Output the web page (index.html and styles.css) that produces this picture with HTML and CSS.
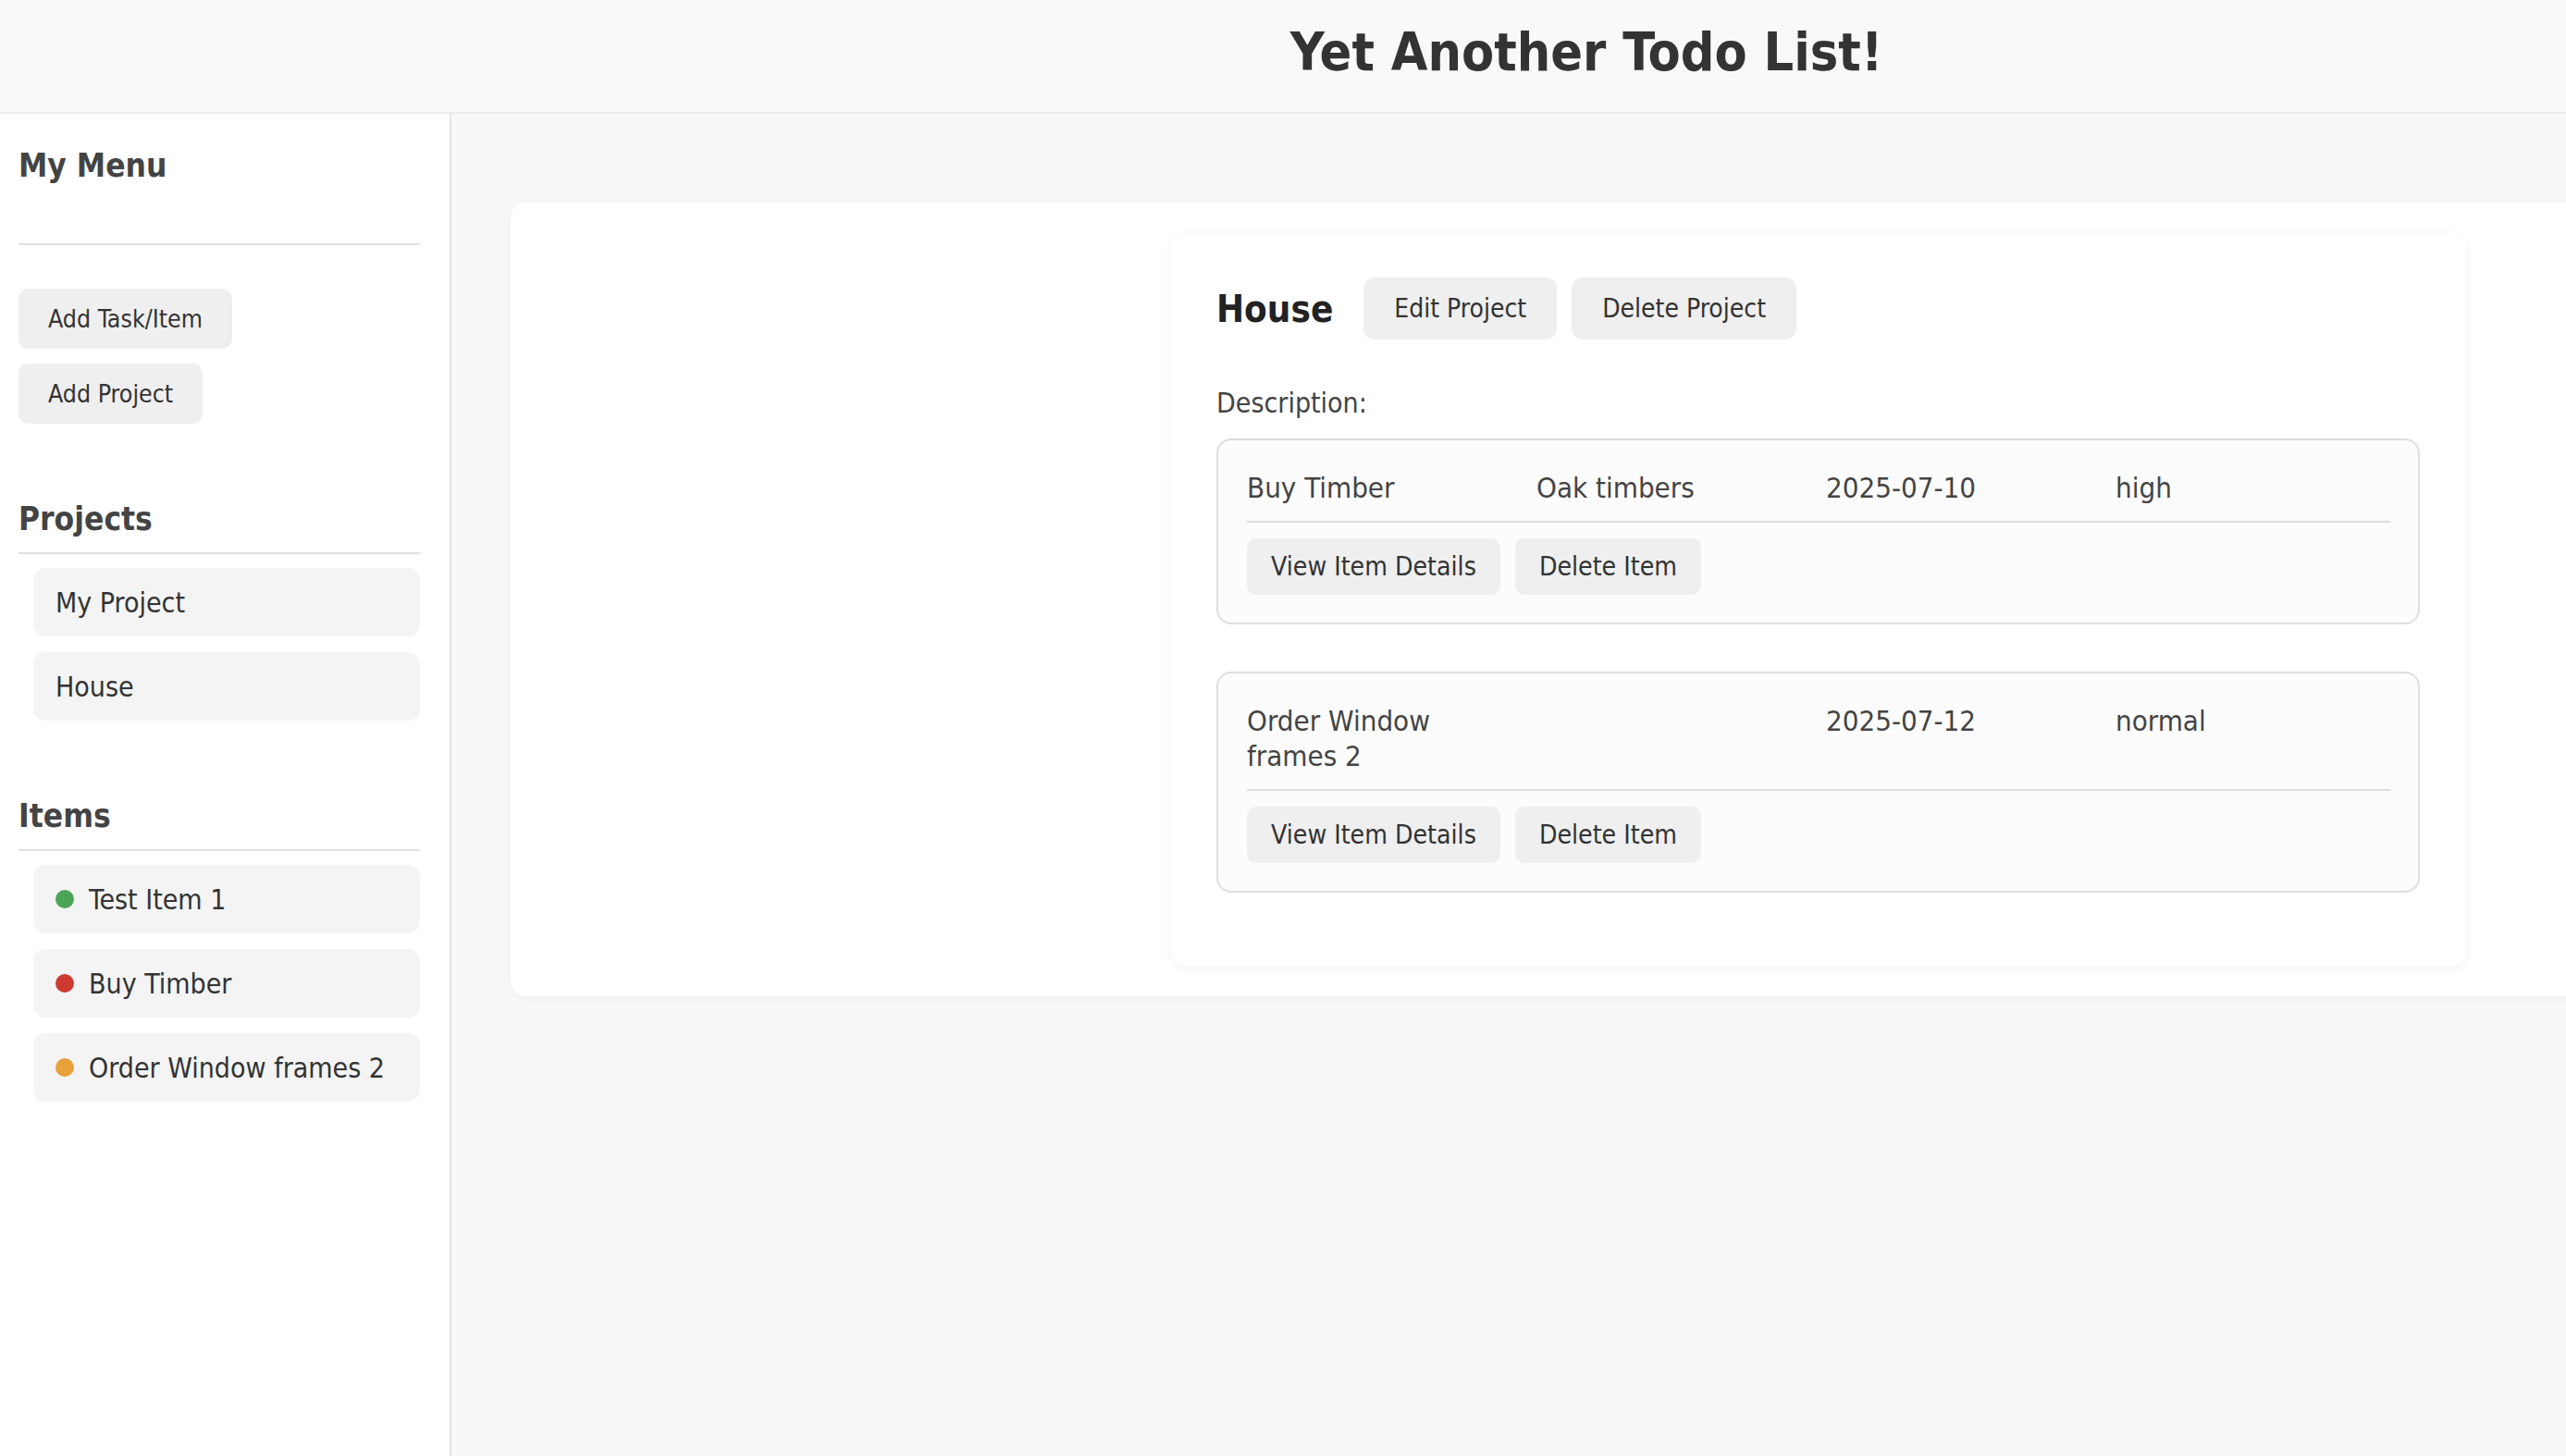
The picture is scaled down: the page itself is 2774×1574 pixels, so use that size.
FILE: index.html
```html
<!DOCTYPE html>
<html lang="en">
<head>
<meta charset="utf-8">
<title>Yet Another Todo List!</title>
<link rel="stylesheet" href="styles.css">
</head>
<body>
<header class="top">
  <h1 class="title">Yet Another Todo List!</h1>
</header>
<div class="layout">
  <aside class="sidebar">
    <h2 class="menu-title">My Menu</h2>
    <hr class="rule rule-menu">
    <div class="menu-buttons">
      <button class="btn btn-side">Add Task/Item</button>
      <button class="btn btn-side">Add Project</button>
    </div>
    <h2 class="section-title">Projects</h2>
    <ul class="side-list">
      <li class="side-item">My Project</li>
      <li class="side-item">House</li>
    </ul>
    <h2 class="section-title">Items</h2>
    <ul class="side-list">
      <li class="side-item"><span class="dot dot-green"></span>Test Item 1</li>
      <li class="side-item"><span class="dot dot-red"></span>Buy Timber</li>
      <li class="side-item"><span class="dot dot-orange"></span>Order Window frames 2</li>
    </ul>
  </aside>
  <main class="main">
    <section class="card">
      <div class="card-aside"></div>
      <div class="panel">
        <div class="panel-head">
          <h2 class="project-name">House</h2>
          <button class="btn btn-main">Edit Project</button>
          <button class="btn btn-main">Delete Project</button>
        </div>
        <p class="description">Description:</p>
        <div class="item-box">
          <div class="item-row">
            <span>Buy Timber</span>
            <span>Oak timbers</span>
            <span>2025-07-10</span>
            <span>high</span>
          </div>
          <div class="item-actions">
            <button class="btn btn-item">View Item Details</button>
            <button class="btn btn-item">Delete Item</button>
          </div>
        </div>
        <div class="item-box">
          <div class="item-row">
            <span>Order Window frames 2</span>
            <span></span>
            <span>2025-07-12</span>
            <span>normal</span>
          </div>
          <div class="item-actions">
            <button class="btn btn-item">View Item Details</button>
            <button class="btn btn-item">Delete Item</button>
          </div>
        </div>
      </div>
    </section>
  </main>
</div>
</body>
</html>
```

FILE: styles.css
```css
* { box-sizing: border-box; }

html, body {
  margin: 0;
  padding: 0;
  height: 100%;
}

body {
  font-family: "DejaVu Sans Condensed", "DejaVu Sans", sans-serif;
  font-stretch: condensed;
  color: #333;
  background: #f8f8f8;
  overflow: hidden;
}

.top {
  height: 123px;
  background: #f9f9f9;
  border-bottom: 2px solid #ececec;
  padding: 24px 0 0 656px;
  text-align: center;
}

.title {
  margin: 0;
  font-size: 57px;
  font-weight: bold;
  color: #333;
  line-height: 65px;
}

.layout {
  display: flex;
  height: calc(100% - 123px);
}

.sidebar {
  width: 488px;
  flex: none;
  background: #fff;
  border-right: 2px solid #e2e2e2;
  padding: 35px 32px 0 20px;
}

.menu-title,
.section-title {
  margin: 0;
  font-size: 35px;
  font-weight: bold;
  color: #444;
  line-height: 42px;
}

.rule {
  border: none;
  border-top: 2px solid #e0e0e0;
  margin: 0;
}

.rule-menu {
  margin-top: 63px;
}

.menu-buttons {
  display: flex;
  flex-direction: column;
  align-items: flex-start;
  gap: 16px;
  margin-top: 47px;
  margin-bottom: 82px;
}

.btn {
  font-family: inherit;
  font-stretch: condensed;
  border: none;
  background: #efefef;
  color: #333;
  cursor: pointer;
}

.btn-side {
  height: 65px;
  padding: 0 32px;
  font-size: 26.5px;
  border-radius: 11px;
}

.section-title {
  font-size: 35px;
  padding-bottom: 15px;
  border-bottom: 2px solid #e0e0e0;
}

.side-list {
  list-style: none;
  margin: 15px 0 0 16px;
  padding: 0;
  display: flex;
  flex-direction: column;
  gap: 17px;
}

.side-list + .section-title {
  margin-top: 82px;
}

.side-item {
  display: flex;
  align-items: center;
  height: 74px;
  padding: 0 24px;
  background: #f4f4f4;
  border-radius: 13px;
  font-size: 30px;
  color: #333;
}

.dot {
  width: 20px;
  height: 20px;
  border-radius: 50%;
  margin-right: 16px;
  flex: none;
}

.dot-green { background: #4ca456; }
.dot-red { background: #cd3a31; }
.dot-orange { background: #e8a13a; }

.main {
  flex: 1;
  min-width: 0;
  padding: 96px 0 0 64px;
  overflow: hidden;
  background: #f8f8f8;
}

.card {
  width: 2300px;
  background: #fff;
  border-radius: 16px;
  box-shadow: 0 2px 10px rgba(0, 0, 0, 0.04);
  padding: 33px 31px 32px 33px;
  display: grid;
  grid-template-columns: 648px 1400px;
  gap: 33px;
  align-items: start;
}

.panel {
  background: #fff;
  border-radius: 16px;
  box-shadow: 0 2px 10px rgba(0, 0, 0, 0.06);
  padding: 48px 50px 29px 49px;
  color: #444;
}

.panel-head {
  display: flex;
  align-items: center;
  gap: 16px;
}

.project-name {
  margin: 0 17px 0 0;
  font-size: 40px;
  font-weight: bold;
  color: #222;
}

.btn-main {
  height: 67px;
  padding: 0 33px;
  font-size: 28px;
  border-radius: 12px;
}

.description {
  margin: 51px 0 21px;
  font-size: 30px;
  line-height: 35px;
  color: #444;
}

.item-box {
  border: 2px solid #dedede;
  border-radius: 16px;
  background: #fcfcfc;
  padding: 32px 30px 30px 31px;
  margin-bottom: 51px;
}

.item-row {
  display: grid;
  grid-template-columns: repeat(4, 1fr);
  gap: 16px;
  font-size: 31px;
  line-height: 38px;
  color: #444;
  padding-bottom: 17px;
  border-bottom: 2px solid #dedede;
}

.item-actions {
  display: flex;
  gap: 16px;
  margin-top: 17px;
}

.btn-item {
  height: 61px;
  padding: 0 26px;
  font-size: 28.2px;
  border-radius: 10px;
}
```
